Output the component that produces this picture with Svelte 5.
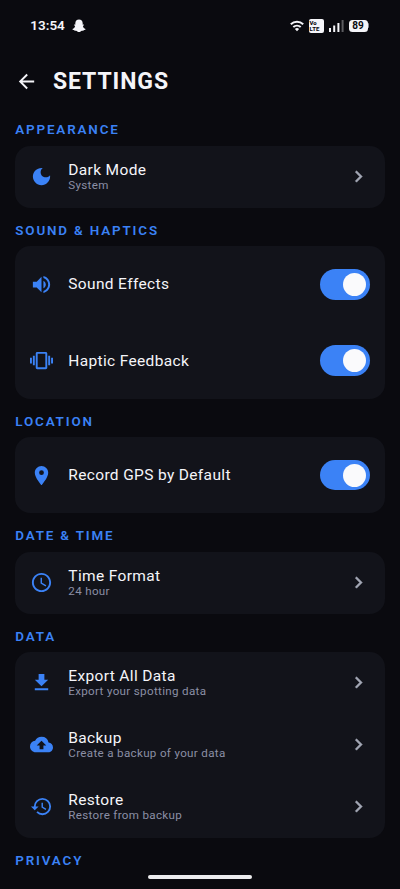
<script>
	const icons = {
		moon: 'M12 3c-4.97 0-9 4.03-9 9s4.03 9 9 9 9-4.03 9-9c0-.46-.04-.92-.1-1.36-.98 1.37-2.58 2.26-4.4 2.26-2.98 0-5.4-2.42-5.4-5.4 0-1.81.89-3.42 2.26-4.4-.44-.06-.9-.1-1.36-.1z',
		volume: 'M3 9v6h4l5 5V4L7 9H3zm13.5 3c0-1.77-1.02-3.29-2.5-4.03v8.05c1.48-.73 2.5-2.25 2.5-4.02zM14 3.23v2.06c2.89.86 5 3.54 5 6.71s-2.11 5.85-5 6.71v2.06c4.01-.91 7-4.49 7-8.77s-2.99-7.86-7-8.77z',
		vibration: 'M0 15h2V9H0v6zm3 2h2V7H3v10zm19-8v6h2V9h-2zm-3 8h2V7h-2v10zM16.5 3h-9C6.67 3 6 3.67 6 4.5v15c0 .83.67 1.5 1.5 1.5h9c.83 0 1.5-.67 1.5-1.5v-15c0-.83-.67-1.5-1.5-1.5zM16 19H8V5h8v14z',
		pin: 'M12 2C8.13 2 5 5.13 5 9c0 5.25 7 13 7 13s7-7.75 7-13c0-3.87-3.13-7-7-7zm0 9.5a2.5 2.5 0 0 1 0-5 2.5 2.5 0 0 1 0 5z',
		clock: 'M11.99 2C6.47 2 2 6.48 2 12s4.47 10 9.99 10C17.52 22 22 17.52 22 12S17.52 2 11.99 2zM12 20c-4.42 0-8-3.58-8-8s3.58-8 8-8 8 3.58 8 8-3.58 8-8 8zm.5-13H11v6l5.25 3.15.75-1.23-4.5-2.67z',
		download: 'M19 9h-4V3H9v6H5l7 7 7-7zM5 18v2h14v-2H5z',
		cloud: 'M19.35 10.04A7.49 7.49 0 0 0 12 4C9.11 4 6.6 5.64 5.35 8.04A5.994 5.994 0 0 0 0 14c0 3.31 2.69 6 6 6h13c2.76 0 5-2.24 5-5 0-2.64-2.05-4.78-4.65-4.96zM14 13v4h-4v-4H7l5-5 5 5h-3z',
		restore: 'M13 3a9 9 0 0 0-9 9H1l3.89 3.89.07.14L9 12H6c0-3.87 3.13-7 7-7s7 3.13 7 7-3.13 7-7 7c-1.93 0-3.68-.79-4.94-2.06l-1.42 1.42A8.954 8.954 0 0 0 13 21a9 9 0 0 0 0-18zm-1 5v5l4.28 2.54.72-1.21-3.5-2.08V8H12z',
		chevron: 'M10 6 8.59 7.41 13.17 12l-4.58 4.59L10 18l6-6z',
		back: 'M20 11H7.83l5.59-5.59L12 4l-8 8 8 8 1.41-1.41L7.83 13H20v-2z'
	};

	let sections = $state([
		{
			title: 'Appearance',
			rows: [{ icon: 'moon', label: 'Dark Mode', detail: 'System' }]
		},
		{
			title: 'Sound & Haptics',
			rows: [
				{ icon: 'volume', label: 'Sound Effects', on: true },
				{ icon: 'vibration', label: 'Haptic Feedback', on: true }
			]
		},
		{
			title: 'Location',
			rows: [{ icon: 'pin', label: 'Record GPS by Default', on: true }]
		},
		{
			title: 'Date & Time',
			rows: [{ icon: 'clock', label: 'Time Format', detail: '24 hour' }]
		},
		{
			title: 'Data',
			rows: [
				{ icon: 'download', label: 'Export All Data', detail: 'Export your spotting data' },
				{ icon: 'cloud', label: 'Backup', detail: 'Create a backup of your data' },
				{ icon: 'restore', label: 'Restore', detail: 'Restore from backup' }
			]
		},
		{ title: 'Privacy', rows: [] }
	]);
</script>

{#snippet icon(name)}
	<svg class="icon" viewBox="0 0 24 24"><path d={icons[name]} /></svg>
{/snippet}

<div class="screen">
	<div class="status">
		<span class="time">13:54</span>
		<svg class="ghost" viewBox="0 0 14 14">
			<path d="M7 .6c2.3 0 3.7 1.6 3.7 3.8v1.4l1.1-.2c.5.2.3.8-.9 1.3.3 1.5 1.2 2.5 2.6 3 .2.6-.6.9-1.7 1.1l-.3.8-1.6-.1c-.9.4-1.5 1.3-2.9 1.3s-2-.9-2.9-1.3l-1.6.1-.3-.8C1.1 10.8.3 10.5.5 9.9c1.4-.5 2.3-1.5 2.6-3-1.2-.5-1.4-1.1-.9-1.3l1.1.2V4.4C3.3 2.2 4.7.6 7 .6z" />
		</svg>
		<div class="indicators">
			<svg class="wifi" viewBox="0 0 14 12">
				<path d="M.8 4.3a9 9 0 0 1 12.4 0M3.3 7.1a5.4 5.4 0 0 1 7.4 0" />
				<path class="dot" d="M7 11.3 4.9 9.1a3 3 0 0 1 4.2 0z" />
			</svg>
			<div class="volte"><span>Vo</span><span>LTE</span></div>
			<svg class="signal" viewBox="0 0 15 12">
				<path d="M0 8h2v4H0zM4.2 5.5h2V12h-2zM8.4 3h2v9h-2z" />
				<path class="faint" d="M12.6 0h2v12h-2z" />
			</svg>
			<div class="battery">89</div>
			<div class="tip"></div>
		</div>
	</div>

	<header>
		<button class="back" aria-label="Back">{@render icon('back')}</button>
		<h1>SETTINGS</h1>
	</header>

	{#each sections as section}
		<section>
			<h2>{section.title}</h2>
			{#if section.rows.length}
				<div class="card">
					{#each section.rows as row}
						<div class="row" class:tall={!row.detail}>
							{@render icon(row.icon)}
							<div class="text">
								<div class="label">{row.label}</div>
								{#if row.detail}
									<div class="detail">{row.detail}</div>
								{/if}
							</div>
							{#if row.detail}
								<div class="chevron">{@render icon('chevron')}</div>
							{:else}
								<button
									class="switch"
									class:on={row.on}
									role="switch"
									aria-checked={row.on}
									aria-label={row.label}
									onclick={() => (row.on = !row.on)}
								>
									<span class="thumb"></span>
								</button>
							{/if}
						</div>
					{/each}
				</div>
			{/if}
		</section>
	{/each}

	<div class="home"></div>
</div>

<style>
	:global(body) {
		background: #0a0a0f;
	}

	.screen {
		position: relative;
		box-sizing: border-box;
		width: 400px;
		height: 889px;
		padding: 0 15.3px;
		overflow: hidden;
		background: #0a0a0f;
		color: #f5f5f9;
		font-family: Roboto, sans-serif;
	}

	button {
		border: 0;
		padding: 0;
		background: none;
		color: inherit;
	}

	svg {
		display: block;
		fill: currentColor;
		flex: none;
	}

	.icon {
		width: 23px;
		height: 23px;
	}

	.status {
		display: flex;
		align-items: center;
		height: 51px;
		padding: 0 15.7px 0 15px;
	}

	.time {
		font-size: 13.5px;
		font-weight: 600;
		line-height: 15px;
	}

	.ghost {
		width: 14px;
		height: 14px;
		margin-left: 7px;
	}

	.indicators {
		display: flex;
		align-items: center;
		margin-left: auto;
	}

	.wifi {
		width: 14px;
		height: 12px;
		fill: none;
		stroke: currentColor;
		stroke-width: 2;
	}

	.wifi .dot {
		fill: currentColor;
		stroke: none;
	}

	.volte {
		display: flex;
		flex-direction: column;
		justify-content: center;
		box-sizing: border-box;
		width: 15px;
		height: 14px;
		margin-left: 5px;
		padding-left: 1px;
		border-radius: 2px;
		background: #f5f5f9;
		color: #0a0a0f;
		font-size: 6px;
		font-weight: 800;
		line-height: 6px;
	}

	.signal {
		width: 15px;
		height: 12px;
		margin-left: 5px;
	}

	.faint {
		opacity: 0.35;
	}

	.battery {
		width: 19px;
		height: 12px;
		margin-left: 5px;
		border-radius: 3.5px;
		background: #f5f5f9;
		color: #0a0a0f;
		font-size: 10px;
		font-weight: 700;
		line-height: 12px;
		text-align: center;
	}

	.tip {
		width: 1.5px;
		height: 5px;
		border-radius: 0 2px 2px 0;
		background: #8a8a90;
	}

	header {
		display: flex;
		align-items: center;
		height: 61px;
	}

	.back {
		width: 23px;
		height: 23px;
	}

	h1 {
		margin: 1px 0 0 14.7px;
		font-size: 23px;
		font-weight: 700;
		line-height: 30px;
		letter-spacing: 0.9px;
	}

	h2 {
		box-sizing: border-box;
		height: 38.25px;
		margin: 0;
		padding-top: 15px;
		color: #3b82f6;
		font-size: 13.4px;
		font-weight: 600;
		line-height: 16px;
		letter-spacing: 1.85px;
		text-transform: uppercase;
	}

	section:first-of-type h2 {
		height: 33.9px;
		padding-top: 10.4px;
	}

	.card {
		border-radius: 15.3px;
		background: #12131a;
	}

	.row {
		display: flex;
		align-items: center;
		height: 62px;
		padding: 0 14.9px 0 14.7px;
		color: #3b82f6;
	}

	.row.tall {
		height: 76.3px;
	}

	.text {
		flex: 1;
		margin-left: 15.3px;
	}

	.label {
		color: #f5f5f9;
		font-size: 15.5px;
		line-height: 18px;
		letter-spacing: 0.35px;
	}

	.detail {
		color: #8b8fa5;
		font-size: 11.6px;
		line-height: 13px;
		letter-spacing: 0.33px;
	}

	/* sit the two-line rows slightly above centre */
	.row:not(.tall) .text {
		padding-bottom: 1px;
	}

	.chevron {
		color: #a3a7b5;
		stroke: currentColor;
		stroke-width: 0.5;
	}

	.switch {
		display: flex;
		align-items: center;
		box-sizing: border-box;
		width: 49.7px;
		height: 30.6px;
		padding: 0 3.8px;
		border-radius: 16px;
		background: #3a3d4a;
	}

	.switch.on {
		justify-content: flex-end;
		background: #3b82f6;
	}

	.thumb {
		width: 23px;
		height: 23px;
		border-radius: 50%;
		background: #fafafc;
	}

	/* gesture bar drawn over the scrolling list */
	.home {
		position: absolute;
		bottom: 10px;
		left: 148px;
		width: 104px;
		height: 4px;
		border-radius: 2px;
		background: #ececee;
	}
</style>
